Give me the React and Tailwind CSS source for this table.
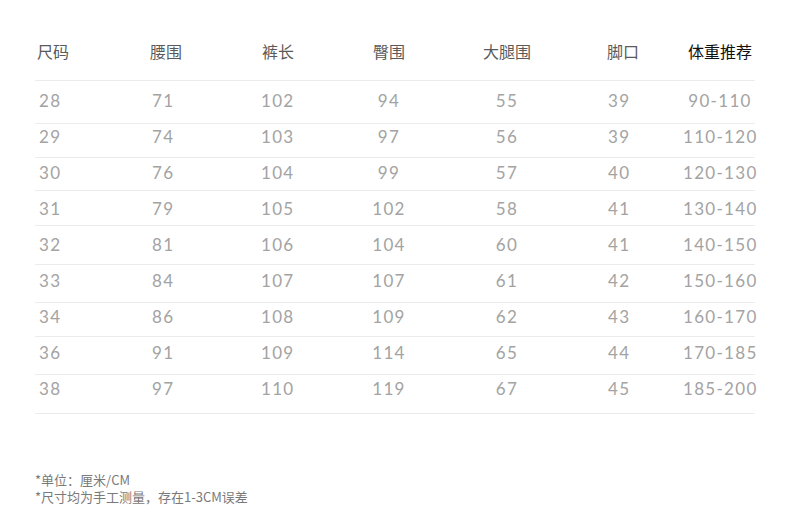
const headers = ['尺码', '腰围', '裤长', '臀围', '大腿围', '脚口', '体重推荐'];

const rows = [
    { cells: ['28', '71', '102', '94', '55', '39', '90-110'], h: 'h-[43px]', pt: 'pt-[10px]' },
    { cells: ['29', '74', '103', '97', '56', '39', '110-120'], h: 'h-[34px]', pt: 'pt-[3px]' },
    { cells: ['30', '76', '104', '99', '57', '40', '120-130'], h: 'h-[33px]', pt: 'pt-[5px]' },
    { cells: ['31', '79', '105', '102', '58', '41', '130-140'], h: 'h-[35px]', pt: 'pt-[8px]' },
    { cells: ['32', '81', '106', '104', '60', '41', '140-150'], h: 'h-[39px]', pt: 'pt-[9px]' },
    { cells: ['33', '84', '107', '107', '61', '42', '150-160'], h: 'h-[38px]', pt: 'pt-[6px]' },
    { cells: ['34', '86', '108', '109', '62', '43', '160-170'], h: 'h-[34px]', pt: 'pt-[4px]' },
    { cells: ['36', '91', '109', '114', '65', '44', '170-185'], h: 'h-[38px]', pt: 'pt-[6px]' },
    { cells: ['38', '97', '110', '119', '67', '45', '185-200'], h: 'h-[40px] border-b', pt: 'pt-[4px]' },
];

// 表头每列的对齐方式
const headClass = [
    'text-left pl-[2px]',
    'text-left pl-[2px]',
    'text-left pl-[2px]',
    'text-center',
    'text-center',
    'text-left pl-[31px]',
    'text-center',
];

// 数据每列的对齐方式
const cellClass = [
    'text-left pl-[4px]',
    'text-left pl-[4px]',
    'text-left pl-[1px]',
    'text-center',
    'text-center',
    'text-left pl-[32px]',
    'text-center',
];

const grid = 'grid grid-cols-[113px_112px_80px_98px_138px_107px_74px]';

export default function App() {
    return (
        <div className="w-[790px] h-[526px] bg-white overflow-hidden pt-[30px] px-[35px] font-['Noto_Sans_CJK_SC',sans-serif]">
            {/* 表头 */}
            <div className={`${grid} h-[50px] pt-[11px] leading-[20px] text-[16px] text-[#5a5a5a]`}>
                {headers.map((h, i) => (
                    <div key={h} className={`${headClass[i]} whitespace-nowrap ${i === 6 ? 'text-[#111]' : ''}`}>
                        {h}
                    </div>
                ))}
            </div>

            {/* 尺码数据 */}
            {rows.map((row, r) => (
                <div
                    key={r}
                    className={`${grid} ${row.h} ${row.pt} border-t border-[#ececec] leading-[20px] text-[17px] tracking-[1.3px] text-[#a3a3a3] font-['Lato',sans-serif]`}
                >
                    {row.cells.map((c, i) => (
                        <div key={i} className={`${cellClass[i]} whitespace-nowrap`}>
                            {c}
                        </div>
                    ))}
                </div>
            ))}

            {/* 备注 */}
            <div className="mt-[57px] text-[13px] leading-[17px] text-[#7a7a7a]">
                <p>*单位：厘米/CM</p>
                <p>*尺寸均为手工测量，存在1-3CM误差</p>
            </div>
        </div>
    );
}
